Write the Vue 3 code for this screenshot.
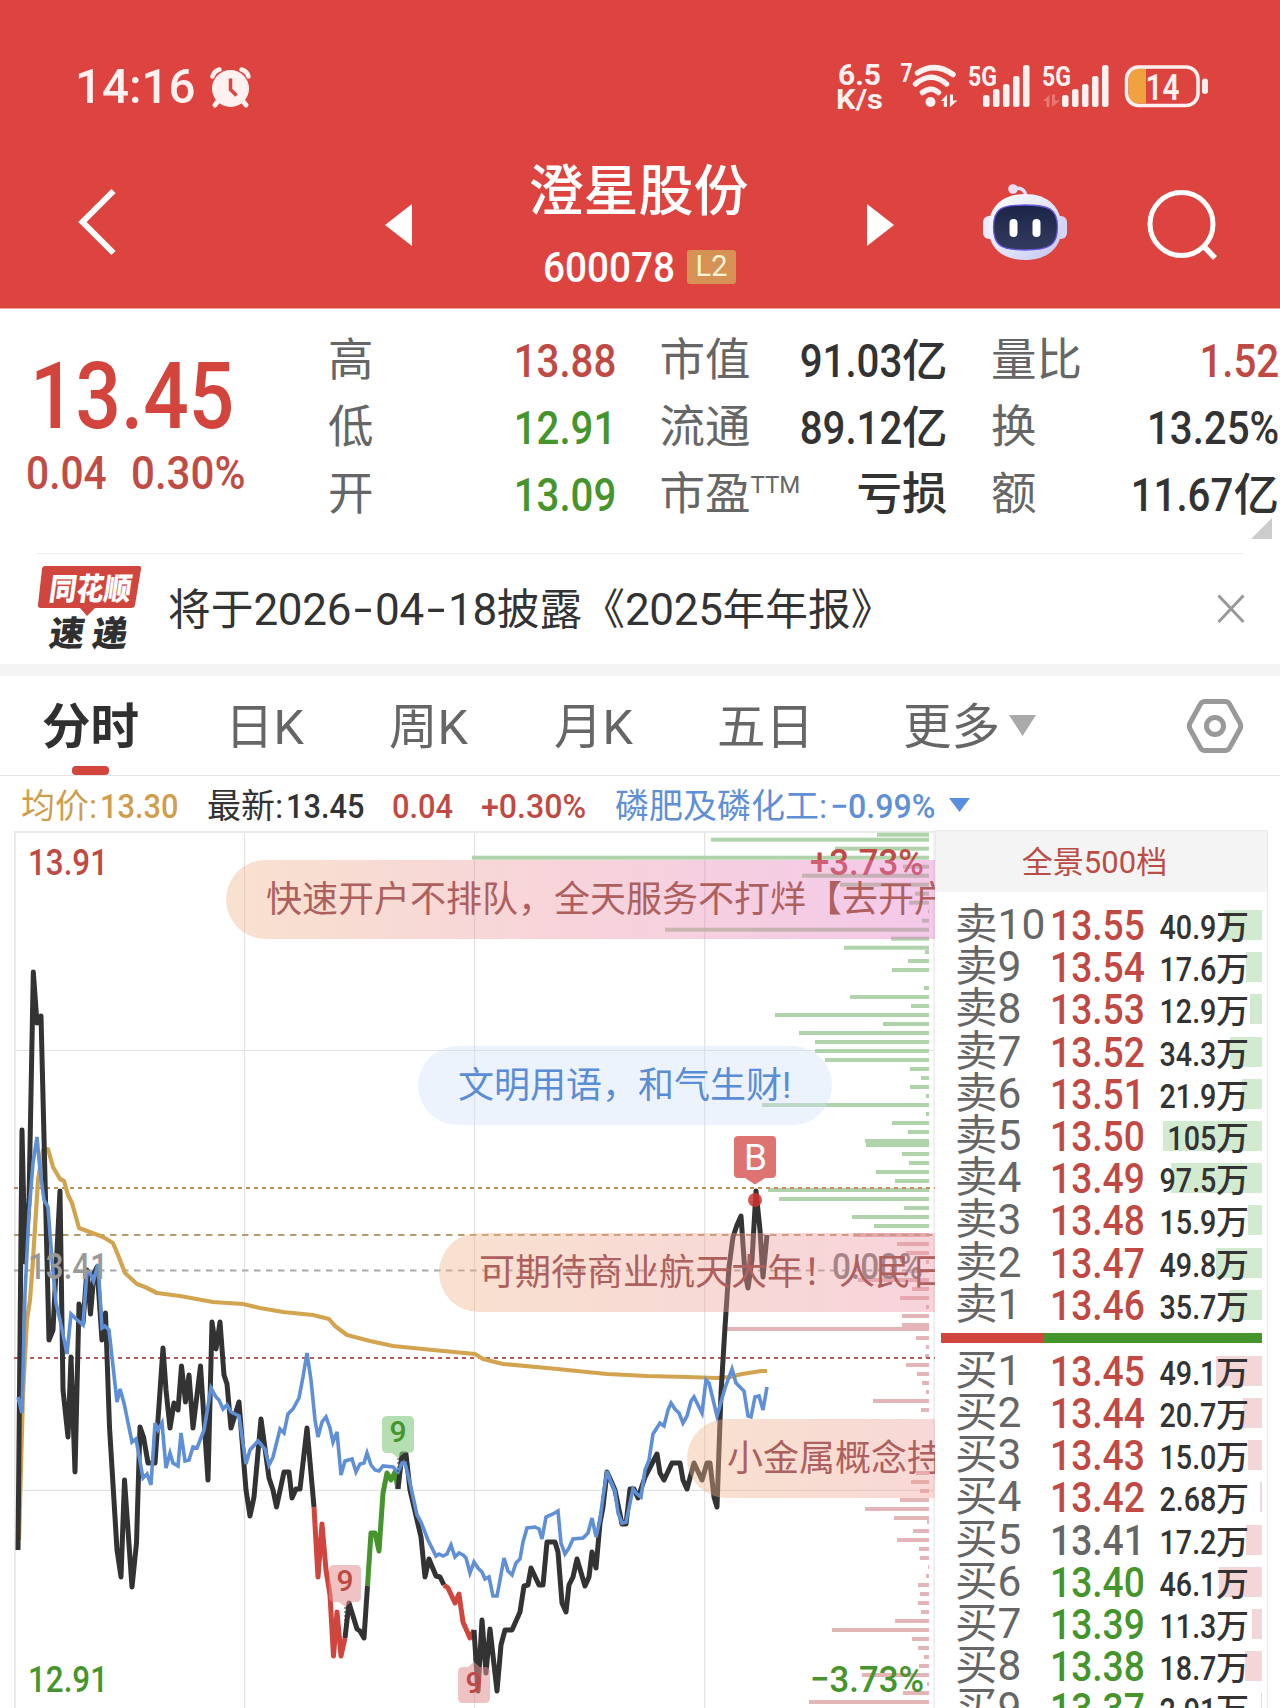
<template>
  <div class="page">
    <header class="header">
      <div class="status">
        <span class="time">14:16</span>
        <svg class="alarm" width="41" height="41" viewBox="0 0 41 41">
          <g fill="none" stroke="#fff1f0" stroke-width="5" stroke-linecap="round">
            <path d="M2.500 9.500Q4 4 9.500 2.500M31.500 2.500Q37 4 38.500 9.500" stroke-width="4.500" />
            <path d="M9 33L5 38M32 33L36 38" />
          </g>
          <circle cx="20.500" cy="21.500" r="18.500" fill="#fff1f0" />
          <path d="M20.500 11.500V22.500L26.500 28.500" fill="none" stroke="#dd443f" stroke-width="3.500" />
        </svg>
        <svg class="signals" width="380" height="50" viewBox="830 62 380 50" fill="#fff1f0">
          <text x="838" y="85" font-size="30" font-weight="700" textLength="43" lengthAdjust="spacingAndGlyphs">6.5</text>
          <text x="836" y="108.500" font-size="28" font-weight="700" textLength="47" lengthAdjust="spacingAndGlyphs">K/s</text>
          <text x="900.500" y="82" font-size="25" font-weight="700" textLength="12" lengthAdjust="spacingAndGlyphs">7</text>
          <g fill="none" stroke="#fff1f0" stroke-width="5.500" stroke-linecap="round">
            <path d="M917.500 73Q935 61.500 953 74.500" />
            <path d="M915.500 84Q931 70.500 946.500 84" />
            <path d="M922.500 92.500Q931 86 938.500 92.500" />
          </g>
          <circle cx="930.500" cy="102" r="5" />
          <path d="M941 101L947 94.500V107H943.800V101ZM950 94.500H953V100.500H957.500L950 107Z" />
          <text x="968" y="85.500" font-size="28" font-weight="700" textLength="29" lengthAdjust="spacingAndGlyphs">5G</text>
          <rect v-for="(b, i) in bars" :key="'a' + i" :x="983 + i * 10" :y="b" width="6.500" :height="107 - b" rx="2.500" />
          <text x="1042" y="85.500" font-size="28" font-weight="700" textLength="29" lengthAdjust="spacingAndGlyphs">5G</text>
          <path opacity="0.300" d="M1043 101L1049.500 94.500V107H1046.500V101ZM1052 94.500H1055V100.500H1060L1052 107Z" />
          <rect v-for="(b, i) in bars" :key="'b' + i" :x="1062 + i * 10" :y="b" width="6.500" :height="107 - b" rx="2.500" />
          <path d="M1139 68.500H1146V103.500H1139Q1128.500 103.500 1128.500 93V79Q1128.500 68.500 1139 68.500Z" fill="#f0a23e" />
          <rect x="1126.500" y="67" width="71.500" height="38.500" rx="12" fill="none" stroke="#fff1f0" stroke-width="3.500" />
          <rect x="1202" y="78.500" width="6" height="15.500" rx="3" />
          <text x="1145.500" y="99.500" font-size="36" font-weight="600" textLength="34" lengthAdjust="spacingAndGlyphs">14</text>
        </svg>
      </div>

      <nav class="nav">
        <svg class="back" width="44" height="70" viewBox="0 0 44 70">
          <path d="M37.500 4L6.500 35L37.500 66" fill="none" stroke="#fff" stroke-width="6" />
        </svg>
        <svg class="prev" width="27" height="42"><path d="M27 0V42L0 21Z" fill="#fff" /></svg>
        <div class="stock">
          <h1>澄星股份</h1>
          <div class="code">
            <span class="code-num">600078</span>
            <span class="level">L2</span>
          </div>
        </div>
        <svg class="next" width="27" height="42"><path d="M0 0V42L27 21Z" fill="#fff" /></svg>
        <svg class="robot" width="86" height="80" viewBox="0 0 86 80">
          <defs>
            <linearGradient id="shell" x1="0" y1="0" x2="1" y2="1">
              <stop offset="0" stop-color="#fff" />
              <stop offset="0.600" stop-color="#dfe0fa" />
              <stop offset="1" stop-color="#bfc4ef" />
            </linearGradient>
            <linearGradient id="visor" x1="0" y1="0" x2="0" y2="1">
              <stop offset="0" stop-color="#1b2547" />
              <stop offset="1" stop-color="#343c5e" />
            </linearGradient>
          </defs>
          <path d="M31 6Q43 3 44 14" fill="none" stroke="#e6defa" stroke-width="3.500" />
          <circle cx="31" cy="6" r="4.800" fill="#eadff7" />
          <rect x="1" y="33" width="14" height="23" rx="6" fill="#eceafc" />
          <rect x="71" y="33" width="14" height="23" rx="6" fill="#d4d5f6" />
          <path d="M43 11C66 11 79.500 24 79.500 45C79.500 66 64 77 43 77C22 77 6.500 66 6.500 45C6.500 24 20 11 43 11Z" fill="url(#shell)" />
          <path d="M43 22C66 22 75.500 25 75.500 44C75.500 62 68 67 43 67C18 67 11.500 62 11.500 44C11.500 25 20 22 43 22Z" fill="url(#visor)" stroke="#6a5ae0" stroke-width="1.300" />
          <rect x="27.500" y="36" width="8" height="18" rx="4" fill="#fff" />
          <rect x="50.500" y="36" width="8" height="18" rx="4" fill="#fff" />
        </svg>
        <svg class="search" width="72" height="72" viewBox="0 0 72 72" fill="none" stroke="#fff">
          <circle cx="34.500" cy="35" r="31.500" stroke-width="5" />
          <path d="M56.500 57L68 69" stroke-width="5.500" />
        </svg>
      </nav>
    </header>

    <section class="quote">
      <div class="price">
        <div class="last">13.45</div>
        <div class="change"><span>0.04</span><span>0.30%</span></div>
      </div>
      <div class="stats">
        <div v-for="s in stats" :key="s.label" class="stat">
          <span class="label">{{ s.label }}<sup v-if="s.sup">{{ s.sup }}</sup></span>
          <span class="value" :class="s.color"><span class="num">{{ s.num }}</span>{{ s.unit }}</span>
        </div>
      </div>
      <i class="corner"></i>
    </section>

    <section class="notice">
      <svg class="brand" width="106" height="88" viewBox="0 0 106 88" font-weight="900">
        <path d="M8 1H102Q104.500 1 104 4L98 40Q97.500 43 94 43H58L50 51L43 43H4Q0.500 43 1 40L5 4Q5.500 1 8 1Z" fill="#d0453e" />
        <text transform="translate(11 35) skewX(-8)" font-size="31" fill="#fff" textLength="82" lengthAdjust="spacingAndGlyphs">同花顺</text>
        <text transform="translate(11 81) skewX(-8)" font-size="35" fill="#303030" textLength="78">速递</text>
      </svg>
      <p>将于<span class="date">2026<b>-</b>04<b>-</b>18</span>披露《<span class="date">2025</span>年年报》</p>
      <svg class="close" width="28" height="30" viewBox="0 0 28 30"><path d="M1.500 1.500L26.500 28M26.500 1.500L1.500 28" stroke="#999" stroke-width="3" /></svg>
    </section>

    <section class="tabs">
      <span class="tab active">分时</span>
      <span class="tab">日K</span>
      <span class="tab">周K</span>
      <span class="tab">月K</span>
      <span class="tab">五日</span>
      <span class="tab">更多<i class="caret"></i></span>
      <svg class="gear" width="58" height="56" viewBox="0 0 58 56" fill="none" stroke="#999" stroke-width="5">
        <path d="M19 3.500H39Q42 3.500 43.500 6L54 25Q55.500 28 54 31L43.500 50Q42 52.500 39 52.500H19Q16 52.500 14.500 50L4 31Q2.500 28 4 25L14.500 6Q16 3.500 19 3.500Z" />
        <circle cx="29" cy="28" r="8.500" />
      </svg>
    </section>

    <section class="legend">
      <span class="gold">均价:<span class="num">13.30</span></span>
      <span>最新:<span class="num">13.45</span></span>
      <span class="red"><span class="num">0.04</span></span>
      <span class="red"><span class="num">+0.30%</span></span>
      <span class="blue">磷肥及磷化工:<span class="num">−0.99%</span></span>
      <i class="caret blue-caret"></i>
    </section>

    <main class="body">
      <div class="chart">
        <svg width="936" height="878" viewBox="0 830 936 878">
          <g stroke="#e2e2e2" stroke-width="1.200" fill="none">
            <path d="M244.500 832V1708M474.500 832V1708M704.700 832V1708M15 1050.500H934M15 1490.300H934" />
            <path d="M14 832H936M15 832V1708" stroke="#ebebeb" stroke-width="2" />
            <path d="M934.500 832V1708" stroke="#eee" stroke-width="2.500" />
          </g>

          <rect v-for="(d, i) in sellDepth" :key="'s' + i" :x="d[0]" :y="d[1] - 2" :width="929 - d[0]" height="4" fill="#b0d3ab" />
          <rect v-for="(d, i) in buyDepth" :key="'r' + i" :x="d[0]" :y="d[1] - 2" :width="929 - d[0]" height="4" fill="#e3b5b6" />

          <g fill="none" stroke-width="1.800">
            <path d="M14 1188H935" stroke="#bd8f5c" stroke-dasharray="4 4" />
            <path d="M14 1235H935" stroke="#b99c6e" stroke-dasharray="6.500 5.500" />
            <path d="M14 1270.500H935" stroke="#aaa" stroke-dasharray="6.500 5.500" />
            <path d="M14 1358H935" stroke="#b25a5a" stroke-dasharray="4 4" />
          </g>

          <g fill="none" stroke-linejoin="round">
            <polyline :points="avgLine" stroke="#d2a450" stroke-width="4.200" />
            <polyline v-for="(seg, i) in priceLine" :key="i" :points="seg.points" :stroke="seg.color" stroke-width="5" />
            <polyline :points="sectorLine" stroke="#5f8fd6" stroke-width="3.600" stroke-linejoin="miter" />
          </g>

          <g font-size="37" font-weight="500">
            <text x="28" y="875" class="f-red" textLength="80" lengthAdjust="spacingAndGlyphs">13.91</text>
            <text x="28" y="1279" fill="#999" textLength="80" lengthAdjust="spacingAndGlyphs">13.41</text>
            <text x="28" y="1692" class="f-green" textLength="80" lengthAdjust="spacingAndGlyphs">12.91</text>
            <text x="810" y="875" class="f-red" textLength="114" lengthAdjust="spacingAndGlyphs">+3.73%</text>
            <text x="832" y="1279" fill="#777" textLength="91" lengthAdjust="spacingAndGlyphs">0.00%</text>
            <text x="810" y="1692" class="f-green" textLength="114" lengthAdjust="spacingAndGlyphs">−3.73%</text>
          </g>

          <g font-size="30" font-weight="500" text-anchor="middle">
            <path d="M387 1416H409Q414 1416 414 1421V1448Q414 1453 409 1453H404L398 1458L392 1453H387Q382 1453 382 1448V1421Q382 1416 387 1416Z" fill="#86c880" opacity="0.600" />
            <text x="398" y="1442" class="f-green">9</text>
            <path d="M334 1565H356Q361 1565 361 1570V1597Q361 1602 356 1602H351L345 1607L339 1602H334Q329 1602 329 1597V1570Q329 1565 334 1565Z" fill="#e29092" opacity="0.550" />
            <text x="345" y="1591" class="f-red">9</text>
            <path d="M463 1667H468L474 1662L480 1667H485Q490 1667 490 1672V1698Q490 1703 485 1703H463Q458 1703 458 1698V1672Q458 1667 463 1667Z" fill="#e29092" opacity="0.550" />
            <text x="474" y="1693" class="f-red">9</text>
            <path d="M345 1607V1638M398 1458V1489M474 1630V1662" stroke="#333" stroke-width="1" stroke-dasharray="2 2" />
          </g>
          <path d="M738 1136H772Q776 1136 776 1140V1174Q776 1178 772 1178H765L755 1184.500L745 1178H738Q734 1178 734 1174V1140Q734 1136 738 1136Z" fill="#dd7471" />
          <text x="755.500" y="1170" font-size="37" fill="#fff" text-anchor="middle">B</text>
          <circle cx="755" cy="1200" r="7" fill="#cf3433" opacity="0.850" />
        </svg>

        <!-- danmaku floating over the plot -->
        <div
          v-for="m in messages"
          :key="m.text"
          class="danmaku"
          :class="m.type"
          :style="{ left: m.x + 'px', top: m.y + 'px', width: m.w + 'px' }"
        >{{ m.text }}</div>
      </div>

      <aside class="book">
        <div class="book-title">全景500档</div>
        <div class="orders asks">
          <div v-for="o in asks" :key="o.name" class="order">
            <i class="bar" :style="{ width: o.bar + 'px' }"></i>
            <span class="name">{{ o.name }}</span>
            <span class="cost red">{{ o.price }}</span>
            <span class="vol"><span class="num">{{ o.vol }}</span>万</span>
          </div>
        </div>
        <div class="ratio"></div>
        <div class="orders bids">
          <div v-for="o in bids" :key="o.name" class="order">
            <i class="bar" :style="{ width: o.bar + 'px' }"></i>
            <span class="name">{{ o.name }}</span>
            <span class="cost" :class="o.color">{{ o.price }}</span>
            <span class="vol"><span class="num">{{ o.vol }}</span>万</span>
          </div>
        </div>
      </aside>
    </main>
  </div>
</template>

<script setup>
// tops of the five signal bars
const bars = [95, 89, 84, 76, 65]

const stats = [
  { label: '高', num: '13.88', color: 'red' },
  { label: '市值', num: '91.03', unit: '亿' },
  { label: '量比', num: '1.52', color: 'red' },
  { label: '低', num: '12.91', color: 'green' },
  { label: '流通', num: '89.12', unit: '亿' },
  { label: '换', num: '13.25%' },
  { label: '开', num: '13.09', color: 'green' },
  { label: '市盈', sup: 'TTM', unit: '亏损' },
  { label: '额', num: '11.67', unit: '亿' }
]

const messages = [
  { text: '快速开户不排队，全天服务不打烊【去开户', x: 226, y: 30, w: 800, type: 'warm' },
  { text: '文明用语，和气生财!', x: 418, y: 216, w: 414, type: 'cool' },
  { text: '可期待商业航天大年！人民日', x: 439, y: 403, w: 1100, type: 'warm' },
  { text: '小金属概念持', x: 687, y: 589, w: 900, type: 'warm' }
]

const order = (name, price, vol, bar, color) => ({ name, price, vol, bar, color })

const asks = [
  order('卖10', '13.55', '40.9', 38),
  order('卖9', '13.54', '17.6', 16),
  order('卖8', '13.53', '12.9', 12),
  order('卖7', '13.52', '34.3', 32),
  order('卖6', '13.51', '21.9', 20),
  order('卖5', '13.50', '105', 99),
  order('卖4', '13.49', '97.5', 91),
  order('卖3', '13.48', '15.9', 14),
  order('卖2', '13.47', '49.8', 46),
  order('卖1', '13.46', '35.7', 33)
]

const bids = [
  order('买1', '13.45', '49.1', 46, 'red'),
  order('买2', '13.44', '20.7', 19, 'red'),
  order('买3', '13.43', '15.0', 14, 'red'),
  order('买4', '13.42', '2.68', 2, 'red'),
  order('买5', '13.41', '17.2', 16, 'flat'),
  order('买6', '13.40', '46.1', 43, 'green'),
  order('买7', '13.39', '11.3', 10, 'green'),
  order('买8', '13.38', '18.7', 17, 'green'),
  order('买9', '13.37', '2.91', 1, 'green')
]

// [left edge, y] of each resting-order bar, all end at x = 929
const sellDepth = [
  [877, 834.7], [711, 839.7], [835, 848.7], [472, 857.7], [903, 866.7], [802, 875.7], [840, 884.7],
  [915, 893.7], [909, 902.7], [928, 911.7], [922, 920.7], [665, 929.7], [891, 938.7], [844, 947.7],
  [925, 952], [908, 961], [892, 970], [924, 988], [850, 997], [911, 1006], [775, 1015], [883, 1024],
  [799, 1033], [815, 1042], [815, 1051], [825, 1060], [910, 1069], [921, 1078], [910, 1087],
  [926, 1096], [762, 1105], [926, 1114], [892, 1123], [908, 1132], [865, 1141], [866, 1145],
  [902, 1154], [909, 1163], [876, 1172], [895, 1181], [768, 1190], [779, 1199], [904, 1208],
  [852, 1217], [874, 1226]
]

const buyDepth = [
  [853, 1235], [897, 1244], [906, 1253], [926, 1262], [909, 1271], [858, 1280], [912, 1289],
  [900, 1298], [926, 1307], [902, 1316], [902, 1325], [723, 1329], [916, 1338], [926, 1347],
  [925, 1356], [906, 1365], [917, 1374], [922, 1383], [926, 1392], [873, 1401], [921, 1410],
  [916, 1473], [911, 1482], [920, 1491], [900, 1500], [865, 1509], [894, 1518], [927, 1522],
  [913, 1531], [897, 1540], [919, 1549], [920, 1558], [928, 1567], [926, 1576], [918, 1585],
  [920, 1594], [918, 1603], [921, 1612], [895, 1621], [832, 1630], [912, 1639], [918, 1648],
  [924, 1657], [919, 1666], [862, 1675], [927, 1684], [903, 1693], [809, 1702]
]

const dark = '#333'
const red = '#d0453d'
const green = '#46942c'

const priceLine = [
  {
    color: dark,
    points:
      '18,1550 22,1130 25,1262 29,1200 33.3,972 37,1023 41,1016 49,1340 53,1330 60,1191 63,1390 68,1437 71,1357 75,1472 79,1304 83,1323 87,1270 90.5,1314 94,1273 97,1267 102,1340 105.5,1313 109.5,1427 117,1550 121,1577 124.5,1480 132,1587 136.5,1543 140,1427 143.5,1437 148,1463 155,1463 163,1348 166,1390 170,1428 174,1403 178,1410 181.5,1366 185.5,1402 189,1375 193,1428 200.5,1366 208,1480 212,1322 216,1349 220,1322 224,1375 227,1384 231,1428 239,1402 246,1490 250,1516 254,1497 261,1419 269,1478 273,1490 276.5,1507 284,1472 289,1472 292,1498 296,1489 300,1489 307,1428 314,1507'
  },
  { color: red, points: '314,1507 318,1577 322,1524 326,1570 330,1595 333.5,1656 337,1612 341,1656 345,1638' },
  { color: dark, points: '345,1638 349,1603 357,1629 360,1631 364,1638 367.5,1586' },
  { color: green, points: '367.5,1586 371,1533 375,1533 379,1551 383,1493 387,1473 391,1480 395,1472 398,1489' },
  { color: dark, points: '398,1489 402,1454 406,1454 410,1490 417,1520 421,1537 425,1577 429,1559 436,1576 440,1577 444,1585' },
  { color: red, points: '444,1585 448,1588 455,1603 459,1594 463,1622 470,1638 474,1630' },
  {
    color: dark,
    points:
      '474,1630 478,1691 482,1620 486,1673 490,1629 497,1691 501,1645 505,1630 512,1630 520,1612 524,1586 528,1585 531,1568 539,1585 543,1585 547,1542 555,1542 558,1552 562,1603 566,1612 569,1585 573,1577 577,1559 585,1586 589,1577 592,1552 596,1568 600,1523 603,1507 607,1472 615,1490 622,1524 626,1524 630,1489 634,1489 638,1498 645,1477 657,1454 660,1473 664,1480 672,1463 680,1463 683,1480 687,1489 694,1463 702,1480 707,1463 710,1463 714,1497 717,1507 721,1393 725,1327 729,1267 733,1237 737,1225 741,1216 745,1273 748,1288 752,1260 756,1191 760,1230 763,1277 767,1235'
  }
]

const avgLine =
  '19,1540 23,1393 27,1320 30,1300 33,1260 38,1180 43,1150 48,1149 53,1167 60,1179 64,1181 68,1195 72,1203 79,1228 87,1231 95,1234 103,1237 113,1243 118,1255 125,1273 137,1284 145,1287 157,1293 180,1296 213,1302 243,1304 260,1308 283,1312 313,1315 329,1319 335,1326 347,1335 370,1341 393,1346 433,1350 475,1354 483,1359 503,1364 547,1368 607,1374 647,1376 687,1377 717,1378 730,1377 742,1374 755,1372 761,1371 767,1371'

const sectorLine =
  '18,1397 22,1413 25,1293 29,1213 33,1163 37,1137 40,1170 44,1200 48,1207 52,1260 56,1303 60,1320 67,1354 71,1314 75,1318 83,1325 87,1272 90,1273 93.5,1281 98,1264 102,1328 105,1326 109,1330 117,1402 120,1389 124,1403 132,1442 136,1439 143,1478 147,1474 151,1485 155,1423 158,1430 162,1423 166,1468 170,1453 173,1463 178,1466 181,1433 185,1461 189,1460 193,1447 197,1448 204,1430 211,1388 216,1397 219,1400 223,1409 227,1405 231,1412 239,1416 246,1464 250,1450 258,1441 265,1449 269,1465 273,1457 280,1429 284,1433 288,1414 293,1409 299,1398 303,1377 307,1353 311,1380 315,1420 318,1437 322,1422 326,1417 330,1428 333,1442 337,1432 341,1475 345,1461 352,1459 356,1472 360,1464 364,1463 367,1453 371,1465 375,1470 379,1471 383,1466 393,1467 398,1472 402,1463 405,1463 410,1483 417,1515 421,1522 428,1540 436,1556 439,1554 443,1556 447,1554 451,1545 455,1557 459,1553 463,1555 466,1558 470,1573 474,1562 478,1568 482,1572 485,1579 489,1577 493,1596 497,1596 500,1580 504,1558 508,1571 512,1575 516,1563 520,1559 523,1542 527,1528 535,1527 539,1529 542,1539 546,1517 553,1514 558,1511 561,1543 565,1554 569,1548 573,1539 583,1538 588,1533 592,1518 596,1537 600,1520 603,1497 607,1471 611,1482 615,1491 618,1513 622,1523 626,1522 633,1489 637,1494 641,1497 645,1470 649,1460 653,1434 660,1423 664,1426 668,1410 671,1403 675,1409 679,1413 683,1423 687,1416 691,1401 694,1397 702,1413 706,1380 709,1383 717,1416 725,1388 732,1369 736,1383 744,1391 748,1416 751,1417 755,1397 759,1396 763,1410 767,1387'
</script>

<style scoped>
.page {
  width: 1280px;
  height: 1708px;
  overflow: hidden;
  background: #fff;
  color: #333;
  font-family: Roboto, "Noto Sans CJK SC", sans-serif;
  white-space: nowrap;
}

svg {
  display: block;
  flex: none;
  overflow: visible;
}

.header {
  height: 309px;
  background: #dd443f;
  border-bottom: 1px solid #eaa29d;
  box-sizing: border-box;
  color: #fff;
}

.status {
  display: flex;
  height: 112px;
  padding: 62px 70px 0 75px;
  box-sizing: border-box;
}

.time {
  width: 134px;
  color: #fff1f0;
  font-size: 49px;
  font-weight: 500;
  line-height: 49px;
  transform: scaleX(0.97);
  transform-origin: left;
}

.alarm {
  margin: 5px 0 0 1px;
}

.signals {
  margin-left: auto;
}

.nav {
  display: flex;
  height: 195px;
}

.back {
  margin: 75px 0 0 76px;
}

.prev {
  margin: 92px 0 0 265px;
}

.stock {
  display: flex;
  flex-direction: column;
  align-items: center;
  width: 455px;
}

h1 {
  margin: 47px 2px 0 0;
  font-size: 55px;
  font-weight: 500;
  line-height: 64px;
}

.code {
  display: flex;
  width: 193px;
  height: 34px;
  margin-top: 27px;
  justify-content: space-between;
}

.code-num {
  width: 140px;
  font-size: 43px;
  font-weight: 500;
  line-height: 35px;
  transform: scaleX(0.9);
  transform-origin: left;
}

.level {
  width: 49px;
  border-radius: 3px;
  background: #d69254;
  color: #fff3d6;
  font-size: 29px;
  line-height: 33px;
  text-align: center;
}

.next {
  margin-top: 92px;
}

.robot {
  margin: 71px 0 0 88px;
}

.search {
  margin: 77px 0 0 79px;
}

.quote {
  position: relative;
  display: flex;
  height: 244px;
  box-sizing: border-box;
}

.price {
  width: 328px;
  color: #d2443c;
}

.last {
  margin: 43px 0 0 30px;
  font-size: 92px;
  font-weight: 500;
  line-height: 90px;
  transform: scaleX(0.87);
  transform-origin: left;
}

.change {
  display: grid;
  grid-template-columns: 105px auto;
  margin: 6px 0 0 26px;
  color: #c04c45;
  font-size: 46px;
  font-weight: 500;
  line-height: 50px;
}

.change span {
  transform: scaleX(0.885);
  transform-origin: left;
}

.change span:last-child {
  transform: scaleX(0.915);
}

.stats {
  display: grid;
  grid-template-columns: repeat(3, 288px);
  grid-auto-rows: 67px;
  column-gap: 43.500px;
  padding-top: 18px;
}

.stat {
  display: flex;
  justify-content: space-between;
  font-size: 45.500px;
  line-height: 68px;
}

.label {
  color: #666;
}

.label sup {
  margin-left: 0;
  font-size: 24px;
  line-height: 0;
  vertical-align: 17px;
}

.value {
  font-weight: 500;
}

.num {
  display: inline-block;
  transform: scaleX(0.89);
  transform-origin: right;
}

.stats .num {
  font-size: 46px;
  transform: scaleX(0.875);
}

.red {
  color: #c04a43;
}

.green {
  color: #46942c;
}

.flat {
  color: #666;
}

.f-red {
  fill: #c04a43;
}

.f-green {
  fill: #46942c;
}

.corner {
  position: absolute;
  right: 8px;
  bottom: 14px;
  width: 21px;
  height: 21px;
  background: #ccc;
  clip-path: polygon(100% 0, 100% 100%, 0 100%);
}

.notice {
  display: flex;
  height: 111px;
  margin: 0 37px;
  border-top: 1px solid #ececec;
  box-sizing: border-box;
}

.brand {
  margin-top: 11px;
}

.notice p {
  margin: 26px 0 0 25px;
  font-size: 42.700px;
  line-height: 60px;
}

.date {
  font-size: 44px;
  letter-spacing: -0.300px;
}

.date b {
  display: inline-block;
  width: 24px;
  font-weight: 400;
  text-align: center;
  transform: translateY(-1px) scaleX(1.5);
}

.close {
  margin: 40px -2px 0 auto;
}

.tabs {
  display: flex;
  height: 112px;
  border-top: 12px solid #f4f4f4;
  border-bottom: 1px solid #e4e4e4;
  box-sizing: border-box;
  color: #666;
  font-size: 48.500px;
  line-height: 103px;
}

.tab {
  position: relative;
  width: 164px;
}

.tab:nth-child(1) {
  width: 183px;
  padding-left: 42px;
}

.tab:nth-child(4) {
  width: 163px;
}

.tab:nth-child(5) {
  width: 186px;
}

.tab:nth-child(3) {
  width: 165px;
}

.tab:nth-child(6) {
  width: 283px;
}

.tab.active {
  color: #303030;
  font-weight: 700;
}

.active::after {
  content: "";
  position: absolute;
  bottom: 0;
  left: 72px;
  width: 37px;
  height: 9px;
  border-radius: 4px;
  background: #d2443c;
}

.caret {
  display: inline-block;
  width: 27px;
  height: 21px;
  margin-left: 9px;
  background: #aaa;
  clip-path: polygon(0 0, 100% 0, 50% 100%);
  vertical-align: 8px;
}

.gear {
  margin-top: 22px;
}

.legend {
  display: grid;
  grid-template-columns: 186px 185px 89px 134px 334px auto;
  justify-content: start;
  height: 54px;
  padding: 4px 0 0 21px;
  box-sizing: border-box;
  font-size: 34px;
  line-height: 52px;
}

.legend .num {
  font-weight: 500;
  transform: scaleX(0.905);
  transform-origin: left;
}

.legend .blue .num,
.legend span:nth-child(4) .num {
  transform: scaleX(0.945);
}

.legend :not(.red) > .num {
  margin-left: 3px;
}

.gold {
  color: #cf9e4d;
}

.blue {
  color: #5f8fd6;
}

.blue-caret {
  width: 21px;
  height: 14px;
  margin: 18px 0 0;
  background: #5a8fe0;
}

.body {
  display: flex;
}

.chart {
  position: relative;
  width: 935px;
  height: 878px;
  overflow: hidden;
}

.danmaku {
  position: absolute;
  height: 79px;
  padding-left: 40px;
  border-radius: 40px;
  box-sizing: border-box;
  font-size: 36px;
  line-height: 80px;
}

.warm {
  background: linear-gradient(90deg, rgba(240, 180, 135, 0.4), rgba(236, 152, 158, 0.4) 35%, rgba(226, 112, 210, 0.4));
  color: #ad605d;
}

.cool {
  background: rgba(208, 225, 247, 0.4);
  color: #5a8dd6;
}

.book {
  width: 333px;
  height: 878px;
  border-right: 1px solid #e9e9e9;
  box-sizing: border-box;
}

.book-title {
  height: 62px;
  border-top: 1px solid #ebebeb;
  border-left: 1px solid #ebebeb;
  box-sizing: border-box;
  background: #f4f4f4;
  color: #bb4d47;
  font-size: 31px;
  line-height: 63px;
  text-align: center;
  padding-right: 14px;
}

.asks {
  padding-top: 12px;
}

.order {
  position: relative;
  display: grid;
  grid-template-columns: 95px minmax(0, 1fr) 110px;
  height: 42.200px;
  padding: 0 18px 0 20px;
  line-height: 42.500px;
}

.bar {
  position: absolute;
  top: 6px;
  right: 5px;
  height: 30px;
  background: #d2ead0;
}

.bids .bar {
  background: #f3d6d7;
}

.name {
  color: #666;
  font-size: 42.500px;
}

.cost {
  position: relative;
  font-size: 43px;
  font-weight: 500;
  transform: scaleX(0.865);
  transform-origin: left;
}

.vol {
  position: relative;
  top: 3px;
  font-size: 33px;
  font-weight: 500;
  text-align: right;
}

.vol .num {
  transform: scaleX(0.87);
}

.ratio {
  height: 10px;
  margin: 7px 5px 7px 6px;
  background: linear-gradient(90deg, #d0453d 102px, #46942c 102px);
}
</style>

<style>
body {
  margin: 0;
  background: #fff;
}
</style>
